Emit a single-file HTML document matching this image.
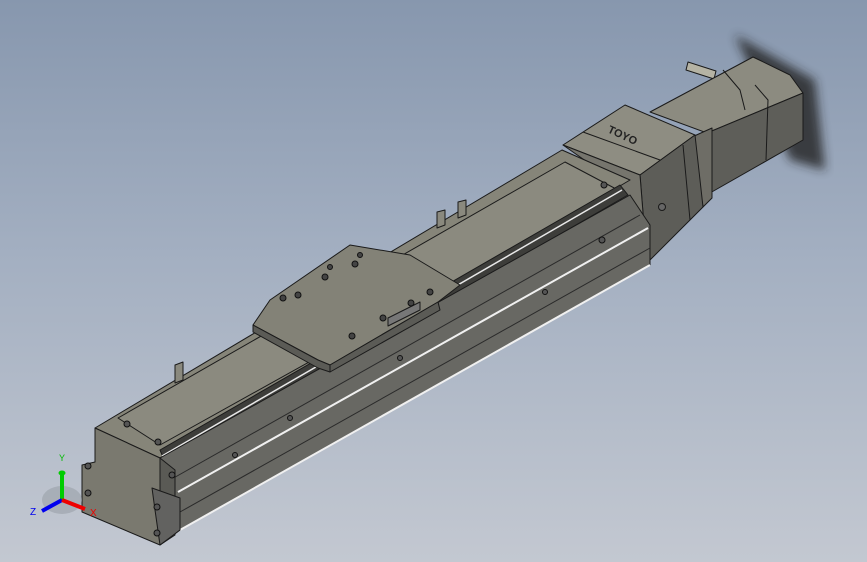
<!DOCTYPE html>
<html><head><meta charset="utf-8"><style>
html,body{margin:0;padding:0;width:867px;height:562px;overflow:hidden}
body{background:linear-gradient(180deg,#8797ae 0%,#a3afc1 45%,#c3c8d1 100%)}
svg{position:absolute;left:0;top:0}
</style></head><body>
<svg width="867" height="562" viewBox="0 0 867 562" xmlns="http://www.w3.org/2000/svg">
<defs><filter id="b"><feGaussianBlur stdDeviation="5"/></filter></defs>
<g stroke="#1a1a1a" stroke-width="1" stroke-linejoin="round">
<!-- motor shadow -->
<path d="M735 35 L815 80 L825 170 L790 160 L770 110 Z" fill="#222" stroke="none" filter="url(#b)" opacity="0.8"/>
<!-- motor shaft -->
<path d="M688 62 L716 71 L714 79 L686 70 Z" fill="#b5b3a4"/>
<!-- motor body -->
<path d="M650 112 L753 57 L790 75 L803 93 L707 133 Z" fill="#8c8b80"/>
<path d="M707 133 L803 93 L803 140 L710 193 Z" fill="#5e5e59"/>
<path d="M755 85 L768 100 L766 160" fill="none"/>
<path d="M723 70 L740 90 L745 110" fill="none"/>
<!-- connector -->
<path d="M692 137 L712 128 L712 198 L703 207 Z" fill="#6e6d66"/>
<!-- gearbox block -->
<path d="M563 145 L625 105 L695 135 L640 175 Z" fill="#8e8d82"/>
<path d="M640 175 L695 135 L703 207 L647 263 Z" fill="#5d5d58"/>
<path d="M563 145 L640 175 L647 263 L625 270 L620 185 Z" fill="#76756d"/>
<path d="M583 132 L660 160" fill="none"/>
<path d="M683 145 L690 220" fill="none"/>
<text x="607" y="132" font-family="Liberation Sans,sans-serif" font-size="11" font-weight="bold" fill="#222" transform="rotate(25 607 132)" stroke="none">TOYO</text>
<circle cx="662" cy="207" r="3.5" fill="#666"/>
<!-- beam top surface -->
<path d="M95 428 L562 150 L630 180 L160 458 Z" fill="#868579"/>
<path d="M118 418 L565 162 L618 190 L160 445 Z" fill="#8b8a7f"/>
<!-- rail groove -->
<path d="M160 450 L620 185 L628 195 L165 462 Z" fill="#3d3d3a"/>
<path d="M162 456 L622 190" stroke="#e8e8e8" stroke-width="1.5" fill="none"/>
<!-- side face -->
<path d="M160 458 L630 195 L650 225 L650 265 L180 530 L160 545 Z" fill="#686863"/>
<path d="M178 492 L648 228" stroke="#f0f0f0" stroke-width="2" fill="none"/>
<path d="M180 530 L650 265" stroke="#f0f0f0" stroke-width="2" fill="none"/>
<path d="M180 512 L650 248" stroke="#2a2a2a" fill="none"/>
<path d="M170 480 L640 215" stroke="#2a2a2a" fill="none"/>
<!-- front block -->
<path d="M95 428 L160 458 L160 545 L82 512 L82 465 L95 462 Z" fill="#7a796f"/>
<path d="M160 458 L175 470 L175 535 L160 545 Z" fill="#5a5a55"/>
<path d="M152 488 L180 498 L180 530 L160 545 L155 510 Z" fill="#626260"/>
<g fill="#555" stroke="#111">
<circle cx="88" cy="466" r="3"/><circle cx="88" cy="493" r="3"/>
<circle cx="157" cy="507" r="3"/><circle cx="157" cy="533" r="3"/>
<circle cx="127" cy="424" r="3"/><circle cx="158" cy="442" r="3"/>
<circle cx="172" cy="475" r="3"/><circle cx="604" cy="185" r="3"/>
<circle cx="602" cy="240" r="3"/><circle cx="235" cy="455" r="2.5"/>
<circle cx="290" cy="418" r="2.5"/><circle cx="400" cy="358" r="2.5"/>
<circle cx="545" cy="292" r="2.5"/>
</g>
<!-- carriage -->
<path d="M350 245 L410 255 L460 285 L438 302 L330 365 L318 360 L253 325 L270 300 Z" fill="#838277"/>
<path d="M253 325 L318 360 L330 365 L330 372 L318 368 L253 332 Z" fill="#5b5b56"/>
<path d="M330 365 L438 302 L440 310 L330 372 Z" fill="#5b5b56"/>
<path d="M388 318 L420 302 L420 310 L388 326 Z" fill="#777"/>
<g fill="#444" stroke="#111">
<circle cx="325" cy="277" r="3"/><circle cx="355" cy="264" r="3"/><circle cx="298" cy="295" r="3"/>
<circle cx="283" cy="298" r="3"/><circle cx="430" cy="292" r="3"/><circle cx="411" cy="303" r="3"/>
<circle cx="383" cy="318" r="3"/><circle cx="352" cy="336" r="3"/><circle cx="330" cy="267" r="2.5"/>
<circle cx="360" cy="255" r="2.5"/>
</g>
<!-- small brackets -->
<path d="M437 212 L445 210 L445 225 L437 228 Z" fill="#8a897e"/>
<path d="M458 202 L466 200 L466 215 L458 218 Z" fill="#8a897e"/>
<path d="M175 365 L183 362 L183 380 L175 383 Z" fill="#8a897e"/>
</g>
<!-- triad -->
<g>
<ellipse cx="62" cy="500" rx="20" ry="14" fill="#9aa0a8" opacity="0.6"/>
<path d="M62 474 L62 500" stroke="#0c0" stroke-width="4"/>
<ellipse cx="62" cy="473" rx="3.5" ry="2.5" fill="#0c0"/>
<path d="M62 500 L42 511" stroke="#00e" stroke-width="4"/>
<path d="M62 500 L85 509" stroke="#e00" stroke-width="4"/>
<text x="59" y="461" font-family="Liberation Sans,sans-serif" font-size="9" fill="#0b0">Y</text>
<text x="30" y="515" font-family="Liberation Sans,sans-serif" font-size="10" fill="#00e">Z</text>
<text x="90" y="516" font-family="Liberation Sans,sans-serif" font-size="10" fill="#e00">X</text>
</g>
</svg>
</body></html>
